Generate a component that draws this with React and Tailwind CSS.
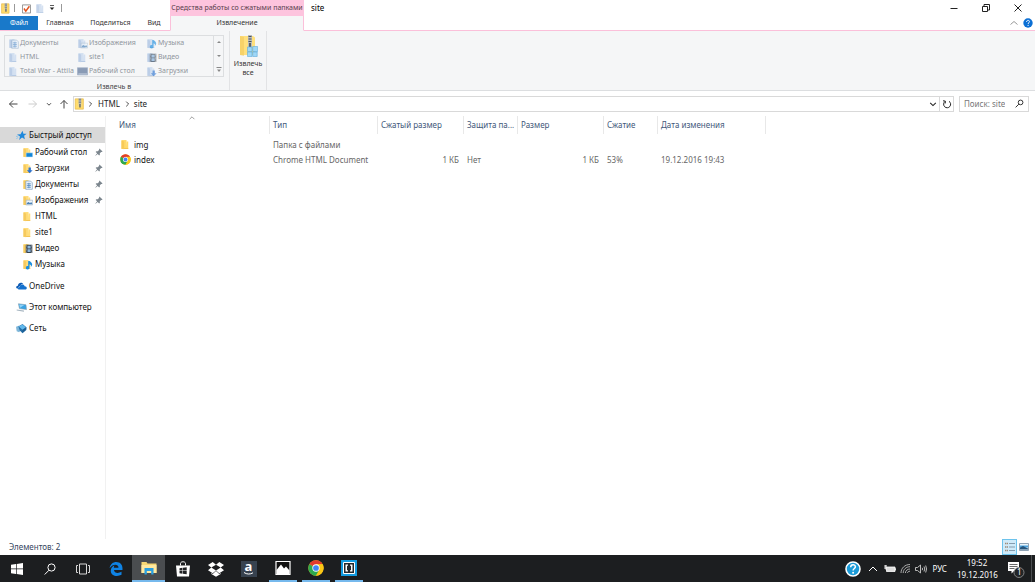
import React from "react";

/* ---------- icons ---------- */

function Folder({ className = "size-[11px]", tone = "#ffd96b", edge = "#f2bd45", children }) {
  return (
    <svg viewBox="0 0 16 16" className={`shrink-0 ${className}`} aria-hidden="true">
      <path d="M2 1.500h7.500v13H2z" fill={tone} />
      <path d="M9.500 3.500H12v11H8.300z" fill={tone} />
      <path d="M3 2.500l3 1v11.500l-4-1v-11z" fill={edge} opacity="0.55" />
      <path d="M6 13.500h6v1H6z" fill={edge} />
      {children}
    </svg>
  );
}

const overlays = {
  none: null,
  desktop: <path d="M6 8.500h9.500v6H6z" fill="#1286d8" stroke="#bfe3fb" strokeWidth="0.7" />,
  download: <path d="M9.500 6.500h3.400v4h2.600l-4.300 4.500L7 10.500h2.500z" fill="#2f74d0" />,
  documents: (
    <g>
      <path d="M5.500 3h7l2.500 2.500v9.500H5.500z" fill="#eef5fc" stroke="#7f9fc0" />
      <path d="M7 7h6M7 9.500h6M7 12h6M10 5.500v8" stroke="#4c86c2" strokeWidth="1.100" />
    </g>
  ),
  pictures: (
    <g>
      <path d="M6 7.500h9.500v7H6z" fill="#eef5fb" stroke="#93a9bd" strokeWidth="0.8" />
      <path d="M7 13.500v-2l2.500-1.500 2 1.500 2-1 1.200 1v2z" fill="#4b83b8" />
    </g>
  ),
  video: (
    <g>
      <path d="M5.500 2.500h9.500v12H5.500z" fill="#34404d" />
      <path d="M8 4h4.500v4H8zM8 9.200h4.500v4H8z" fill="#8db6dc" />
      <path d="M6.600 3v11.500M13.900 3v11.500" stroke="#f0f2f4" strokeWidth="0.8" strokeDasharray="1 1" />
    </g>
  ),
  music: (
    <path d="M9 3v7.300a2.700 2.500 0 1 0 1.900 2.400V7.500c2 .8 2.600 2 1.900 4.200C16 8.600 15.400 6 10.900 3z" fill="#1b8fe0" />
  ),
};

function KindIcon({ kind, muted }) {
  if (muted && kind === "desktop") {
    return (
      <svg viewBox="0 0 16 16" className="size-[11px] shrink-0" aria-hidden="true">
        <path d="M.5 2.500h15v10.500H.5z" fill="#8a9bb5" stroke="#a9b6ca" />
        <path d="M2 11.500h12.500" stroke="#dbe3ee" />
      </svg>
    );
  }
  return (
    <Folder
      tone={muted ? "#d3e0f1" : "#ffdc79"}
      edge={muted ? "#a9c0de" : "#efbb48"}
    >
      <g opacity={muted ? 0.6 : 1}>{overlays[kind]}</g>
    </Folder>
  );
}

function ZipFolder({ className, extract }) {
  return (
    <svg viewBox={extract ? "0 0 19 22" : "0 0 12 14"} className={`shrink-0 ${className}`} aria-hidden="true">
      {extract ? (
        <g>
          <path d="M1 1h13l2 1.500V20H1z" fill="#ffe07d" />
          <path d="M1 1l4 1v19l-4-1z" fill="#efc355" opacity="0.5" />
          <path d="M9 0h4v12H9z" fill="#b9bcbe" />
          <path d="M9.500 1.500h3M9.500 4h3M9.500 6.500h3" stroke="#4c5358" strokeWidth="1.200" />
          <path d="M10 8h2v4h-2z" fill="#5c6266" />
          <g fill="#9fd7f7" stroke="#5fabda" strokeWidth="0.600">
            <path d="M8.500 12h4.500v4.500H8.500zM13.700 11.500h5v5h-5zM8.500 17h4.500v4.500H8.500zM13.700 17h4.500v4.500h-4.500z" />
          </g>
        </g>
      ) : (
        <g>
          <path d="M1 1h9.500v12H1z" fill="#ffdc6e" stroke="#e8b942" strokeWidth="0.8" />
          <path d="M5 0h3v10H5z" fill="#d0d1cd" />
          <path d="M5 1.500h3M5 3.500h3M5 5.500h3" stroke="#586068" strokeWidth="0.9" />
          <path d="M5.700 7h1.700v4H5.700z" fill="#6d6a55" />
        </g>
      )}
    </svg>
  );
}

function Chrome({ className }) {
  return (
    <svg viewBox="0 0 24 24" className={`shrink-0 ${className}`} aria-hidden="true">
      <circle cx="12" cy="12" r="11.500" fill="#fbc716" />
      <path d="M12 12L2.050 6.250A11.500 11.500 0 0 1 21.960 6.250H12z" fill="#e33b2e" />
      <path d="M2.050 6.250A11.500 11.500 0 0 0 12 23.500L17 14.900 12 12z" fill="#2da94f" />
      <path d="M12 6.500h9.960A11.500 11.500 0 0 1 12 23.500L17 14.900z" fill="#fbc716" />
      <circle cx="12" cy="12" r="5.500" fill="#fff" />
      <circle cx="12" cy="12" r="4.300" fill="#4285f4" />
    </svg>
  );
}

function Line({ d, box = "0 0 10 10", className = "size-[10px]", width = 1 }) {
  return (
    <svg viewBox={box} className={`shrink-0 ${className}`} fill="none" stroke="currentColor" strokeWidth={width} aria-hidden="true">
      <path d={d} />
    </svg>
  );
}

function Pin() {
  return (
    <svg viewBox="0 0 10 10" className="size-2 shrink-0 text-[#7c868e]" aria-hidden="true">
      <path d="M5.500.5l4 4-1 .6-.7-.2-1.800 1.800.1 1.800-.9.800L3.400 7.500.7 9.700.4 9.400l2.300-2.700L.8 4.900l.9-.9 1.800.1 1.800-1.800-.3-.8z" fill="currentColor" />
    </svg>
  );
}

function HelpBadge({ className, ring }) {
  return (
    <svg viewBox="0 0 16 16" className={`shrink-0 ${className}`} aria-hidden="true">
      <circle cx="8" cy="8" r={ring ? 7 : 7.500} fill={ring ? "#1b9bd8" : "#0b6fd4"} stroke={ring ? "#fff" : "none"} strokeWidth="1.600" />
      <path d="M5.700 6.300c0-3.400 4.700-3.200 4.700-.5 0 1.700-2.300 1.700-2.300 3.700" fill="none" stroke="#fff" strokeWidth="1.500" />
      <circle cx="8.100" cy="11.700" r="1" fill="#fff" />
    </svg>
  );
}

function Star() {
  return (
    <svg viewBox="0 0 16 16" className="size-[11px] shrink-0" aria-hidden="true">
      <path d="M9.500 1l1.300 4.400 4.700.1-3.700 2.900 1.100 5.100-4.100-2.700-4.300 3.700 1.300-5.200L1.500 6.500l5-.5z" fill="#2089dc" />
      <path d="M0 9.500l3-.7M.5 12.500l2.700-1.500" stroke="#6dbcf2" />
    </svg>
  );
}

function Cloud() {
  return (
    <svg viewBox="0 0 16 16" className="size-[11px] shrink-0" aria-hidden="true">
      <path d="M1.500 11C-.8 10 .3 6.700 2.700 6.900 3 3.100 8 1 10.500 4.500 8 4.500 6.500 5.500 6 7.500c-2.500 0-2.900 2-2.300 3.500z" fill="#0c5bb5" />
      <path d="M4.500 12.500c-2.400-.3-2-3.900.8-3.900C5.600 4.500 12 4 12.500 7.500c4-.1 4.200 5 1 5z" fill="#1471ce" />
    </svg>
  );
}

function Computer() {
  return (
    <svg viewBox="0 0 16 16" className="size-[11px] shrink-0" aria-hidden="true">
      <path d="M3.500 2.500L14.500 4l.8 7L5 9.500z" fill="#3ba4e4" stroke="#8598a6" strokeWidth="0.8" />
      <path d="M4.500 3.500L12 4.500 6 8.500z" fill="#8fd2f7" />
      <path d="M1 11l10.500 1.500v1.800L1 12.500z" fill="#a7b6c1" />
    </svg>
  );
}

function Network() {
  return (
    <svg viewBox="0 0 16 16" className="size-[11px] shrink-0" aria-hidden="true">
      <path d="M0 5.500l5-2 2 7-2.500 3L1 12z" fill="#7fb7da" />
      <path d="M3.500 5L9.500 1.500 15.500 6.500 15 10 9.500 15 5.500 11z" fill="#256fa8" />
      <path d="M4 5.200L9.500 2l4.800 4.300-5 3.500z" fill="#63b9ec" />
      <path d="M9.300 10.300l5.200-3.500-.2 3-4.700 4z" fill="#1d5c90" />
    </svg>
  );
}

/* ---------- data ---------- */

const gallery = [
  ["Документы", "documents"],
  ["Изображения", "pictures"],
  ["Музыка", "music"],
  ["HTML", "none"],
  ["site1", "none"],
  ["Видео", "video"],
  ["Total War - Attila", "none"],
  ["Рабочий стол", "desktop"],
  ["Загрузки", "download"],
];

const quick = [
  ["Рабочий стол", "desktop", true],
  ["Загрузки", "download", true],
  ["Документы", "documents", true],
  ["Изображения", "pictures", true],
  ["HTML", "none", false],
  ["site1", "none", false],
  ["Видео", "video", false],
  ["Музыка", "music", false],
];

const roots = [
  ["OneDrive", <Cloud />],
  ["Этот компьютер", <Computer />],
  ["Сеть", <Network />],
];

const columns = ["Имя", "Тип", "Сжатый размер", "Защита па...", "Размер", "Сжатие", "Дата изменения"];

const files = [
  { name: "img", icon: <Folder />, cells: ["Папка с файлами", "", "", "", "", ""] },
  {
    name: "index",
    icon: <Chrome className="size-[11px]" />,
    cells: ["Chrome HTML Document", "1 КБ", "Нет", "1 КБ", "53%", "19.12.2016 19:43"],
  },
];

const pinnedApps = [
  ["Пуск", false, <svg viewBox="0 0 12 12" className="size-3" fill="#fff"><path d="M0 1.700l5-.7v4.600H0zM5.700.9L12 0v5.600H5.700zM0 6.300h5V11l-5-.7zM5.700 6.300H12V12l-6.300-.9z" /></svg>],
  ["Поиск", false, <svg viewBox="0 0 12 12" className="size-3" fill="none" stroke="#fff"><circle cx="7.500" cy="4.500" r="3.600" /><path d="M5 7.200L.7 11.500" /></svg>],
  ["Представление задач", false, <svg viewBox="0 0 14 12" className="h-3 w-3.5" fill="none" stroke="#d8d8d8"><path d="M3.500 1h7v10h-7zM2 2.500H.5v7H2M12 2.500h1.500v7H12" /></svg>],
  ["Edge", false, <svg viewBox="0 0 16 16" className="size-3.5" fill="#0f83e4"><path d="M.7 7.100C1.500 2.300 4.700 0 8.400 0c4.500 0 7 3.400 7 7v2.100H5.700c.2 4.100 5.400 4.200 8.600 2.100v3.500C9.200 17.300 2 16 2 9.900c0-2.900 1.800-5 4.300-5.900-.6.800-.7 1.700-.8 2.500h5.300c.2-4.400-6.700-4.600-10.100.6z" /></svg>],
  ["Проводник", true, <svg viewBox="0 0 16 14" className="h-3.5 w-4"><path d="M.5 1h5l1 1.500h9V12H.5z" fill="#f7d774" /><path d="M.5 4h15v8H.5z" fill="#ffe9a1" /><path d="M3.500 13.500V7h9v6.500h-2.300V10H5.800v3.500z" fill="#2a9fe0" /></svg>],
  ["Магазин", false, <svg viewBox="0 0 14 16" className="h-4 w-3.5"><path d="M4.500 4.500V2.500c0-2.300 5-2.300 5 0v2" fill="none" stroke="#fff" /><path d="M0 4.500h14l-1 11H1z" fill="#fff" /><path d="M3.500 7.200l3-.4v2.700h-3zM7 6.700l3.700-.5v3.300H7zM3.500 10h3v2.700l-3-.4zM7 10h3.700v3.300L7 12.800z" fill="#202224" /></svg>],
  ["Dropbox", false, <svg viewBox="0 0 16 16" className="size-4" fill="#fff"><path d="M4.700 1L8 3.700 3.300 6.600 0 4zM11.300 1L16 4l-3.300 2.600L8 3.700zM3.300 6.600L8 9.500l-3.300 2.700L0 9.200zM12.700 6.600L16 9.200l-4.700 3L8 9.500zM8 10.100l3.300 2.800 1.400-.9v1L8 15.800l-4.700-2.800v-1l1.400.9z" /></svg>],
  ["Amazon", false, <span className="flex size-4 flex-col items-center bg-[#37424f] text-white"><span className="h-[11px] text-[13px] leading-[10px] font-bold">a</span><svg viewBox="0 0 10 3" className="h-[3px] w-2.5" fill="none" stroke="#fff"><path d="M0 .5c3 2 6 2 9 .3" /></svg></span>],
];

const runningApps = [
  ["Фотографии", <svg viewBox="0 0 16 16" className="size-4"><path d="M1 1.500h14v13H1z" fill="#111" stroke="#fff" strokeWidth="1.200" /><path d="M1.500 14V10L6 4.500l3 4 2-2 3.500 4V14z" fill="#fff" /></svg>],
  ["Chrome", <Chrome className="size-4" />],
  ["Brackets", <svg viewBox="0 0 16 16" className="size-4"><path d="M0 0h16v16H0z" fill="#129be0" /><path d="M2.500 2.500h11v11h-11z" fill="#24282b" stroke="#fff" /><path d="M7 4.500H4.500v7H7v-1.200H6V5.700h1zM9 4.500h2.500v7H9v-1.200h1V5.700H9z" fill="#fff" /></svg>],
];

/* ---------- sections ---------- */

function TitleBar() {
  return (
    <div className="flex h-4 shrink-0 items-stretch text-black">
      <div className="flex w-[170px] shrink-0 items-center">
        <ZipFolder className="h-[11px] w-[11px]" />
        <span className="ml-[3px] h-2 w-px bg-[#999]" />
        <button aria-label="Свойства" className="ml-[7px]">
          <svg viewBox="0 0 10 11" className="h-[11px] w-[9px]"><path d="M.5 1.500h9v9h-9z" fill="#fff" stroke="#8c8c8c" /><path d="M2.200 5.500l2 3 4-5.500" fill="none" stroke="#e0531f" strokeWidth="1.600" /></svg>
        </button>
        <button aria-label="Создать папку" className="ml-1"><Folder className="size-[11px]" tone="#d5e1f1" edge="#b6c9e2" /></button>
        <button aria-label="Настройка панели" className="ml-[3px]">
          <svg viewBox="0 0 6 6" className="size-[6px]"><path d="M1 .5h4" stroke="#333" strokeWidth="0.800" /><path d="M.7 2.500h4.600L3 5z" fill="#222" /></svg>
        </button>
        <span className="ml-[6px] h-2 w-px bg-[#999]" />
      </div>
      <div className="flex w-[134px] shrink-0 items-center justify-center bg-[#fdc4de] text-[7px] text-[#57404c]">
        <span className="whitespace-nowrap">Средства работы со сжатыми папками</span>
      </div>
      <h1 className="flex flex-1 items-center pl-[7px]">site</h1>
      <div className="flex items-center pr-px text-[#222]">
        <button aria-label="Свернуть" className="flex w-8 justify-center"><Line d="M1.500 5.500h7" /></button>
        <button aria-label="Свернуть в окно" className="flex w-8 justify-center"><Line d="M1.500 3.500h5v5h-5zM3 3.500v-2h5.500V7H6.500" /></button>
        <button aria-label="Закрыть" className="flex w-8 justify-center"><Line d="M1.500 1.500l7 7M8.500 1.500l-7 7" /></button>
      </div>
    </div>
  );
}

function Tabs() {
  return (
    <div className="flex h-[15px] shrink-0 text-[7px] text-[#333]">
      <div className="flex w-[170px] shrink-0 border-b border-[#fbc0da]">
        <button className="w-[38px] bg-[#1979ca] text-white">Файл</button>
        <button className="w-[44px]">Главная</button>
        <button className="w-[57px]">Поделиться</button>
        <button className="w-[30px]">Вид</button>
      </div>
      <button className="w-[134px] shrink-0 border-x border-b border-x-[#fbc0da] border-b-[#f5f6f7] bg-[#f5f6f7]">Извлечение</button>
      <div className="flex flex-1 items-center justify-end gap-1 border-b border-[#fbc0da] pr-[2px]">
        <button aria-label="Свернуть ленту" className="text-[#999]"><Line d="M1.500 6.500L5 3.500l3.500 3" /></button>
        <button aria-label="Справка"><HelpBadge className="size-[10px]" /></button>
      </div>
    </div>
  );
}

function Ribbon() {
  return (
    <div className="flex h-[60px] shrink-0 border-b border-[#dcdee0] bg-[#f5f6f7] text-[7px] text-[#444]">
      <div className="flex w-[230px] flex-col items-center border-r border-[#e2e3e5] pt-1 pr-px">
        <div className="flex h-[42px] w-[220px] border border-[#dcdee0]">
          <div className="grid flex-1 auto-rows-[14px] grid-cols-[69px_69px_1fr] pl-[3px] text-[#8f959c]">
            {gallery.map(([label, kind]) => (
              <button key={label} className="flex items-center gap-px whitespace-nowrap">
                <KindIcon kind={kind} muted />
                {label}
              </button>
            ))}
          </div>
          <div className="flex w-[10px] flex-col justify-between border-l border-[#dcdee0] py-[2px] text-[#888]">
            <button aria-label="Вверх" className="flex justify-center"><svg viewBox="0 0 8 8" className="size-2" fill="currentColor"><path d="M2 5l2-2 2 2z" /></svg></button>
            <button aria-label="Вниз" className="flex justify-center"><svg viewBox="0 0 8 8" className="size-2" fill="currentColor"><path d="M2 3h4L4 5z" /></svg></button>
            <button aria-label="Дополнительно" className="flex justify-center"><svg viewBox="0 0 8 8" className="size-2" fill="currentColor"><path d="M1.500 1h5v1h-5zM2 3.500h4L4 6z" /></svg></button>
          </div>
        </div>
        <span className="mt-[5px]">Извлечь в</span>
      </div>
      <div className="flex w-[37px] justify-center border-r border-[#e2e3e5] pt-1">
        <button className="flex flex-col items-center text-center text-[#333]">
          <ZipFolder extract className="h-[22px] w-[19px]" />
          <span className="mt-[2px] leading-[9px]">Извлечь<br />все</span>
        </button>
      </div>
    </div>
  );
}

function AddressBar() {
  return (
    <div className="flex h-[25px] shrink-0 items-center pr-[6px] text-[#222]">
      <div className="flex w-[73px] shrink-0 items-center">
        <button aria-label="Назад" className="ml-2 text-[#444]"><Line d="M9.500 5h-8M5 1.500L1.500 5 5 8.500" /></button>
        <button aria-label="Вперед" className="ml-[10px] text-[#ccc]"><Line d="M.5 5h8M5 1.500L8.500 5 5 8.500" /></button>
        <button aria-label="Последние" className="ml-[7px] text-[#444]"><Line className="size-[8px]" d="M2.500 4L5 6.500 7.500 4" width={1.2} /></button>
        <button aria-label="Вверх" className="ml-[6px] text-[#444]"><Line d="M5 9.500v-8M1.500 5L5 1.500 8.500 5" /></button>
      </div>
      <nav aria-label="Путь" className="flex h-4 flex-1 items-center border border-[#d9d9d9]">
        <ZipFolder className="h-[12px] w-[11px]" />
        <Line className="ml-px size-[8px]" d="M4 2l3 3-3 3" />
        <button className="ml-1">HTML</button>
        <Line className="ml-[3px] size-[8px]" d="M4 2l3 3-3 3" />
        <button className="ml-[3px]">site</button>
        <button aria-label="Журнал адресов" className="ml-auto flex w-[12px] justify-center"><Line className="size-[8px]" d="M1.500 3.500L5 7l3.500-3.500" width={1.3} /></button>
        <button aria-label="Обновить" className="flex h-full w-[14px] items-center justify-center border-l border-[#d9d9d9]"><Line d="M3 2.500A3.500 3.500 0 1 0 7 2.300M1 1.800l2.300.3v2.300" /></button>
      </nav>
      <label className="ml-[5px] flex h-4 w-[70px] items-center border border-[#d9d9d9] pr-1 pl-1">
        <input type="search" aria-label="Поиск: site" placeholder="Поиск: site" className="w-[49px] min-w-0 flex-1 outline-none placeholder:text-[#777]" />
        <svg viewBox="0 0 10 10" className="size-[9px] shrink-0" fill="none" stroke="#333" strokeWidth="1.100"><circle cx="6.200" cy="3.800" r="2.600" /><path d="M4.300 5.700L.7 9.300" /></svg>
      </label>
    </div>
  );
}

function Sidebar() {
  return (
    <nav aria-label="Область навигации" className="w-[106px] shrink-0 border-r border-[#f1f1f1] pt-[11px] text-[#111]">
      <a href="#quick" className="flex h-4 items-center gap-[2px] bg-[#d9d9d9] pl-4"><Star />Быстрый доступ</a>
      <ul className="pt-px">
        {quick.map(([label, kind, pinned]) => (
          <li key={label}>
            <a href="#folder" className="flex h-4 items-center gap-[2px] pl-[22px] pr-[2px]">
              <KindIcon kind={kind} />
              <span className="flex-1">{label}</span>
              {pinned && <Pin />}
            </a>
          </li>
        ))}
      </ul>
      <ul className="flex flex-col gap-[5px] pt-[6px]">
        {roots.map(([label, icon]) => (
          <li key={label}>
            <a href="#root-item" className="flex h-4 items-center gap-[2px] pl-4">{icon}{label}</a>
          </li>
        ))}
      </ul>
    </nav>
  );
}

function FileTable() {
  return (
    <div className="min-w-0 flex-1 pl-[9px]">
      <table className="w-[651px] table-fixed border-separate border-spacing-0 text-left text-[#666]">
        <colgroup>
          <col className="w-[155px]" />
          <col className="w-[108px]" />
          <col className="w-[86px]" />
          <col className="w-[54px]" />
          <col className="w-[86px]" />
          <col className="w-[54px]" />
          <col className="w-[108px]" />
        </colgroup>
        <thead>
          <tr className="h-[18px] text-[#42587a]">
            {columns.map((c, i) => (
              <th key={c} className="relative border-r border-[#e8e8e8] pl-[3px] font-normal whitespace-nowrap first:pl-1">
                {c}
                {i === 0 && <Line className="absolute top-[-2px] left-[73px] size-[8px] text-[#888]" d="M2 6.500l3-3 3 3" />}
              </th>
            ))}
          </tr>
        </thead>
        <tbody>
          <tr aria-hidden="true" className="h-[3px]"><td colSpan={7} /></tr>
          {files.map((f) => (
            <tr key={f.name} className="h-[15px]">
              <td className="pl-[5px] text-[#111]">
                <span className="flex items-center gap-[3px]">{f.icon}{f.name}</span>
              </td>
              {f.cells.map((c, i) => (
                <td key={i} className={i === 1 || i === 3 ? "pr-[5px] text-right" : "pl-[3px] whitespace-nowrap"}>{c}</td>
              ))}
            </tr>
          ))}
        </tbody>
      </table>
    </div>
  );
}

function StatusBar() {
  return (
    <footer className="flex h-4 shrink-0 items-center justify-between pl-[9px] pr-1 text-[#33445c]">
      <span>Элементов: 2</span>
      <div className="flex items-center">
        <button aria-label="Таблица" className="flex h-4 w-[15px] items-center justify-center border border-[#6dc3ec] bg-[#cfebfa]">
          <svg viewBox="0 0 10 10" className="size-[10px]"><path d="M0 1.500h3M0 5h3M0 8.500h3" stroke="#a08b78" strokeWidth="1.500" strokeDasharray="1.500 .5" /><path d="M4 1.500h6M4 5h6M4 8.500h6" stroke="#7d93a6" strokeWidth="0.900" /></svg>
        </button>
        <button aria-label="Крупные значки" className="flex w-[14px] justify-center">
          <svg viewBox="0 0 10 8" className="h-2 w-[10px]"><path d="M.5.5h9v7h-9z" fill="#e9f4fb" stroke="#8fa3b5" /><path d="M1 2.500h8v2H1z" fill="#48a2df" /><path d="M1 4.500l3-1.500 5 2.500v1H1z" fill="#26557d" /></svg>
        </button>
      </div>
    </footer>
  );
}

function Taskbar() {
  return (
    <div className="flex h-[27px] shrink-0 items-stretch justify-between bg-[#1c1e20] text-white">
      <div className="flex gap-px">
        <div className="flex">
          {pinnedApps.map(([label, active, icon]) => (
            <button
              key={label}
              aria-label={label}
              className={`flex w-[33px] flex-col items-center ${active ? "mr-px bg-[#4a4d50]" : ""}`}
            >
              <span className="flex flex-1 items-center">{icon}</span>
              {active && <span className="h-[2px] w-full bg-[#76b9ed]" />}
            </button>
          ))}
        </div>
        <div className="flex">
          {runningApps.map(([label, icon]) => (
            <button key={label} aria-label={label} className="flex w-[33px] flex-col items-center">
              <span className="flex flex-1 items-center">{icon}</span>
              <span className="h-[2px] w-7 bg-[#76b9ed]" />
            </button>
          ))}
        </div>
      </div>
      <div className="flex items-center">
        <button aria-label="Центр поддержки"><HelpBadge ring className="size-4" /></button>
        <button aria-label="Скрытые значки" className="ml-[7px]"><Line d="M1 7l4-4 4 4" /></button>
        <button aria-label="Батарея" className="ml-[6px]">
          <svg viewBox="0 0 12 10" className="h-[10px] w-3"><path d="M2.500 3h8.500v4.500H2.500z" fill="#ddd" stroke="#fff" strokeWidth="0.800" /><path d="M11.600 4.300v2M0 2h3M0 4h2.500M1.800 1v4.500" stroke="#fff" strokeWidth="0.900" /></svg>
        </button>
        <button aria-label="Wi-Fi" className="ml-[4px]">
          <svg viewBox="0 0 11 11" className="size-[11px]" fill="none" stroke="#bbb" strokeWidth="0.900"><path d="M1 10C1 5 5 1.500 10 1.500M3.200 10c0-3.500 3-6.300 6.800-6.300M5.400 10C5.400 7.600 7.600 6 10 6M7.500 10C7.500 9 8.500 8.200 10 8.200" /></svg>
        </button>
        <button aria-label="Громкость" className="ml-[4px]">
          <svg viewBox="0 0 12 10" className="h-[10px] w-3" fill="none" stroke="#ccc" strokeWidth="0.900"><path d="M.5 3.500h2l3-2.500v8l-3-2.500h-2zM7.200 3.800q.8 1.200 0 2.400M9 2.500q1.500 2.500 0 5M10.700 1.500q1.700 3.500 0 7" /></svg>
        </button>
        <button className="ml-[6px]">РУС</button>
        <button className="ml-[10px] w-[40px] text-center leading-3">19:52<br />19.12.2016</button>
        <button aria-label="Уведомления: 1" className="mr-[6px] ml-[10px] flex">
          <span className="relative flex">
            <svg viewBox="0 0 18 18" className="size-[18px]"><path d="M1 2h11v9H7l-2.500 2.500V11H1z" fill="#fff" /><path d="M2.500 4.500h8M2.500 6.500h8M2.500 8.500h5" stroke="#444" strokeWidth="0.800" /><circle cx="12" cy="12.500" r="5" fill="#222527" stroke="#999" strokeWidth="0.800" /></svg>
            <span className="absolute top-[6px] left-[10px] leading-3">1</span>
          </span>
        </button>
        <span className="h-full w-px bg-[#4a4d50]" />
        <button aria-label="Показать рабочий стол" className="h-full w-[3px]" />
      </div>
    </div>
  );
}

export default function App() {
  return (
    <div className="flex h-screen flex-col bg-white font-['Noto_Sans','Open_Sans',sans-serif] text-[8px] leading-[10px]">
      <TitleBar />
      <Tabs />
      <Ribbon />
      <AddressBar />
      <main className="flex min-h-0 flex-1">
        <Sidebar />
        <FileTable />
      </main>
      <StatusBar />
      <Taskbar />
    </div>
  );
}
